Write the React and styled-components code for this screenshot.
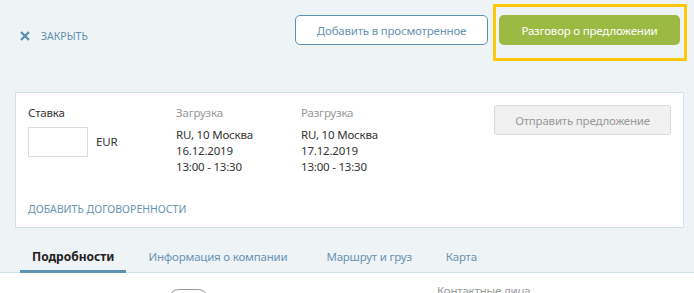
import React from "react";
import styled, { createGlobalStyle } from "styled-components";

const GlobalStyle = createGlobalStyle`
    body {
        margin: 0;
        background: #eef3f6;
        font-family: "Noto Sans", "Open Sans", sans-serif;
        color: #333;
    }
    * { box-sizing: border-box; }
`;

const Page = styled.div`
    width: 694px;
    height: 293px;
    overflow: hidden;
`;

const TopBar = styled.div`
    display: flex;
    align-items: flex-start;
    padding: 15px 14px 0 20px;
    height: 92px;
`;

const CloseLink = styled.a`
    display: flex;
    align-items: center;
    gap: 11px;
    margin-top: 14px;
    font-size: 10.5px;
    text-transform: uppercase;
    color: #5f8fae;
    cursor: pointer;
`;

const Spacer = styled.div`
    flex: 1;
`;

const OutlineButton = styled.button`
    height: 30px;
    width: 193px;
    border: 1px solid #5f8fae;
    border-radius: 5px;
    background: #fff;
    color: #6a93b1;
    font-family: inherit;
    font-size: 11.5px;
    letter-spacing: -0.2px;
    cursor: pointer;
`;

const Highlight = styled.div`
    position: relative;
    margin-left: 11px;

    &::after {
        content: "";
        position: absolute;
        top: -11px;
        left: -6px;
        right: -7px;
        bottom: -16px;
        border: 3px solid #ffc80b;
        pointer-events: none;
    }
`;

const GreenButton = styled.button`
    height: 30px;
    width: 181px;
    border: none;
    border-radius: 5px;
    background: #9aba44;
    color: #fff;
    font-family: inherit;
    font-size: 11.5px;
    letter-spacing: -0.2px;
    cursor: pointer;
`;

const Card = styled.div`
    margin: 0 10px 0 15px;
    height: 136px;
    background: #fff;
    border: 1px solid #d3e0e8;
    padding: 12px 12px 0 12px;
    display: flex;
    flex-direction: column;
`;

const CardRow = styled.div`
    display: flex;
    flex: 1;
`;

const Column = styled.div`
    width: ${(p) => p.width}px;
    font-size: 11.5px;
    letter-spacing: -0.2px;
    line-height: 16px;
`;

const Label = styled.div`
    color: ${(p) => (p.muted ? "#999" : "#333")};
    margin-bottom: ${(p) => (p.muted ? 6 : 6)}px;
`;

const RateRow = styled.div`
    display: flex;
    align-items: center;
    gap: 8px;
`;

const RateInput = styled.input`
    width: 60px;
    height: 30px;
    border: 1px solid #dcdcdc;
    font-family: inherit;
`;

const SendButton = styled.button`
    margin-left: auto;
    width: 177px;
    height: 30px;
    border: 1px solid #d9d9d9;
    border-radius: 3px;
    background: #f1f1f1;
    color: #999;
    font-family: inherit;
    font-size: 11.5px;
    letter-spacing: -0.2px;
`;

const AgreementLink = styled.a`
    font-size: 10.5px;
    text-transform: uppercase;
    color: #6a93b1;
    padding-bottom: 11px;
    cursor: pointer;
`;

const Tabs = styled.div`
    display: flex;
    margin-top: 16px;
    padding-left: 20px;
    border-bottom: 1px solid #d3e0e8;
`;

const Tab = styled.div`
    padding: 0 ${(p) => p.padRight}px 0 ${(p) => p.padLeft}px;
    height: 29px;
    font-size: ${(p) => (p.active ? 12 : 11.5)}px;
    letter-spacing: ${(p) => (p.active ? 0 : -0.2)}px;
    line-height: 26px;
    font-weight: ${(p) => (p.active ? 700 : 400)};
    color: ${(p) => (p.active ? "#222" : "#6a93b1")};
    border-bottom: 3px solid ${(p) => (p.active ? "#5f8fae" : "transparent")};
    margin-bottom: -1px;
    cursor: pointer;
`;

const Content = styled.div`
    background: #fff;
    height: 40px;
    display: flex;
    padding: 10px 0 0 20px;
    font-size: 11.5px;
    letter-spacing: -0.2px;
`;

const Field = styled.div`
    display: flex;
    align-items: center;
    gap: 6px;
    width: 417px;
    color: #999;

    b {
        color: #222;
    }
`;

const Pill = styled.span`
    border: 1px solid #999;
    border-radius: 10px;
    padding: 1px 10px;
    color: #333;
    font-size: 11px;
`;

const ContactsTitle = styled.div`
    color: #999;
`;

const CloseIcon = () => (
    <svg width="10" height="10" viewBox="0 0 10 10">
        <path d="M1 1 L9 9 M9 1 L1 9" stroke="#5f8fae" strokeWidth="2.4" />
    </svg>
);

export default function App() {
    return (
        <Page>
            <GlobalStyle />
            <TopBar>
                <CloseLink>
                    <CloseIcon />
                    Закрыть
                </CloseLink>
                <Spacer />
                <OutlineButton>Добавить в просмотренное</OutlineButton>
                <Highlight>
                    <GreenButton>Разговор о предложении</GreenButton>
                </Highlight>
            </TopBar>
            <Card>
                <CardRow>
                    <Column width={148}>
                        <Label>Ставка</Label>
                        <RateRow>
                            <RateInput />
                            EUR
                        </RateRow>
                    </Column>
                    <Column width={125}>
                        <Label muted>Загрузка</Label>
                        <div>RU, 10 Москва</div>
                        <div>16.12.2019</div>
                        <div>13:00 - 13:30</div>
                    </Column>
                    <Column width={125}>
                        <Label muted>Разгрузка</Label>
                        <div>RU, 10 Москва</div>
                        <div>17.12.2019</div>
                        <div>13:00 - 13:30</div>
                    </Column>
                    <SendButton>Отправить предложение</SendButton>
                </CardRow>
                <AgreementLink>Добавить договоренности</AgreementLink>
            </Card>
            <Tabs>
                <Tab active padLeft={12} padRight={12}>Подробности</Tab>
                <Tab padLeft={22} padRight={19}>Информация о компании</Tab>
                <Tab padLeft={20} padRight={12}>Маршрут и груз</Tab>
                <Tab padLeft={22} padRight={12}>Карта</Tab>
            </Tabs>
            <Content>
                <Field>
                    Тип кузова: <b>Сцепка, мега</b>
                    <Pill>ETL</Pill>
                </Field>
                <ContactsTitle>Контактные лица</ContactsTitle>
            </Content>
        </Page>
    );
}
